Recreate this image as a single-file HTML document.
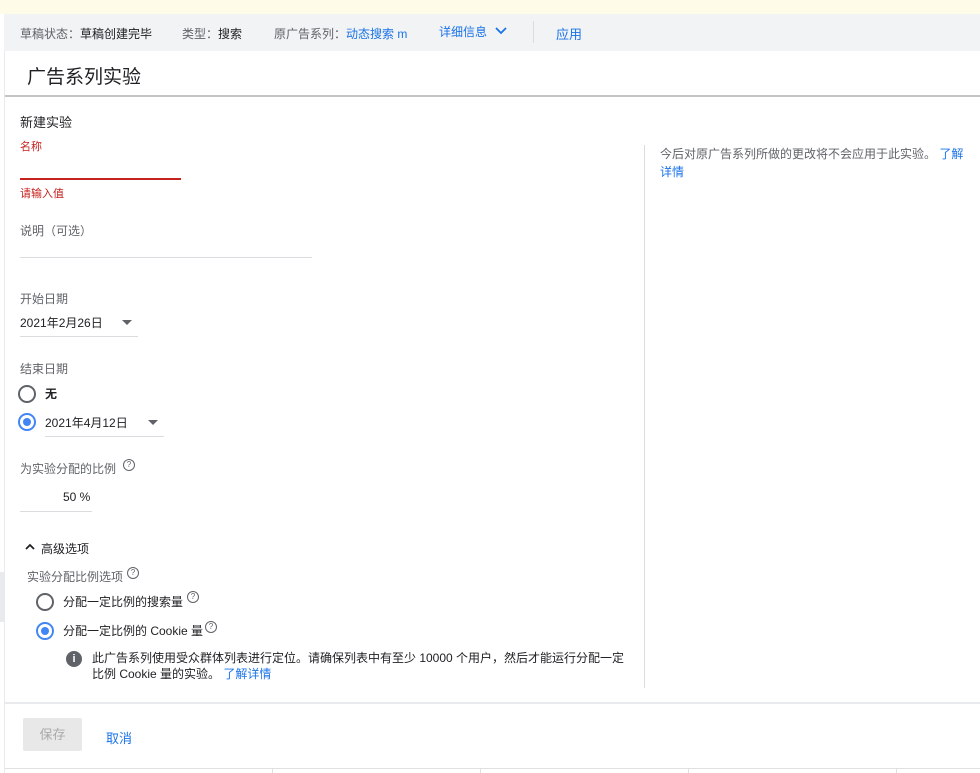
<!DOCTYPE html>
<html><head><meta charset="utf-8"><style>
body{margin:0;width:980px;height:773px;position:relative;overflow:hidden;background:#fff;font-family:"Liberation Sans","Noto Sans CJK SC",sans-serif;font-size:12px;color:#202124}
.a{position:absolute;white-space:nowrap}
.g{color:#5f6368}.b{color:#1a73e8}.r{color:#c5221f}
.line{position:absolute;height:1px;background:#dadce0}
.radio{position:absolute;width:14px;height:14px;border:2px solid #5f6368;border-radius:50%}
.radio.on{border-color:#4285f4}
.radio.on::after{content:"";position:absolute;left:3px;top:3px;width:8px;height:8px;border-radius:50%;background:#4285f4}
.q{position:absolute;width:10px;height:10px;border:1px solid #5f6368;border-radius:50%;font-size:8px;line-height:10px;text-align:center;color:#5f6368}
.tri{position:absolute;width:0;height:0;border-left:5px solid transparent;border-right:5px solid transparent;border-top:5px solid #5f6368}
</style></head><body>
<div class="a" style="left:0;top:0;width:980px;height:14px;background:#fefbe8"></div>
<div class="a" style="left:4px;top:14px;width:976px;height:37px;background:#f1f3f4"></div>
<div class="a" style="left:0;top:14px;width:4px;height:759px;background:#fff"></div>
<div class="a" style="left:4px;top:51px;width:1px;height:722px;background:#e8eaed"></div>
<div class="a g" style="left:20px;top:25px">草稿状态：<span style="color:#202124">草稿创建完毕</span></div>
<div class="a g" style="left:182px;top:25px">类型：<span style="color:#202124">搜索</span></div>
<div class="a g" style="left:274px;top:25px">原广告系列：<span class="b">动态搜索 m</span></div>
<div class="a b" style="left:439px;top:23px">详细信息</div>
<svg class="a" style="left:495px;top:26px" width="12" height="10"><path d="M1 2l5 5 5-5" stroke="#1a73e8" stroke-width="1.8" fill="none"/></svg>
<div class="a" style="left:533px;top:21px;width:1px;height:22px;background:#dadce0"></div>
<div class="a b" style="left:556px;top:24px;font-size:13px">应用</div>
<div class="a" style="left:27px;top:62px;font-size:19px">广告系列实验</div>
<div class="a" style="left:5px;top:95px;width:975px;height:2px;background:#c4c4c4"></div>
<div class="a" style="left:20px;top:112px;font-size:13px">新建实验</div>
<div class="a r" style="left:20px;top:138px;font-size:11px">名称</div>
<div class="a" style="left:20px;top:178px;width:161px;height:2px;background:#c5221f"></div>
<div class="a r" style="left:20px;top:185px;font-size:11px">请输入值</div>
<div class="a g" style="left:20px;top:222px">说明（可选）</div>
<div class="line" style="left:20px;top:257px;width:292px"></div>
<div class="a g" style="left:20px;top:290px">开始日期</div>
<div class="a" style="left:20px;top:314px">2021年2月26日</div>
<div class="tri" style="left:122px;top:320px"></div>
<div class="line" style="left:20px;top:336px;width:118px"></div>
<div class="a g" style="left:20px;top:360px">结束日期</div>
<div class="radio" style="left:18px;top:385px"></div>
<div class="a" style="left:45px;top:385px;font-weight:bold">无</div>
<div class="radio on" style="left:18px;top:413px"></div>
<div class="a" style="left:45px;top:414px">2021年4月12日</div>
<div class="tri" style="left:148px;top:420px"></div>
<div class="line" style="left:45px;top:436px;width:119px"></div>
<div class="a g" style="left:20px;top:460px">为实验分配的比例</div>
<div class="q" style="left:123px;top:459px">?</div>
<div class="a" style="left:63px;top:490px">50 %</div>
<div class="line" style="left:20px;top:511px;width:72px"></div>
<svg class="a" style="left:25px;top:543px" width="10" height="8"><path d="M1 6l4-4 4 4" stroke="#202124" stroke-width="1.8" fill="none"/></svg>
<div class="a" style="left:41px;top:540px">高级选项</div>
<div class="a g" style="left:27px;top:568px">实验分配比例选项</div>
<div class="q" style="left:127px;top:567px">?</div>
<div class="radio" style="left:36px;top:593px"></div>
<div class="a" style="left:63px;top:593px">分配一定比例的搜索量</div>
<div class="q" style="left:187px;top:591px">?</div>
<div class="radio on" style="left:36px;top:622px"></div>
<div class="a" style="left:63px;top:622px">分配一定比例的 Cookie 量</div>
<div class="q" style="left:205px;top:621px">?</div>
<div class="a" style="left:66px;top:651px;width:16px;height:16px;border-radius:50%;background:#5f6368;color:#fff;font-weight:bold;font-size:11px;line-height:16px;text-align:center">i</div>
<div class="a" style="left:92px;top:650px;line-height:16px">此广告系列使用受众群体列表进行定位。请确保列表中有至少 10000 个用户，然后才能运行分配一定<br>比例 Cookie 量的实验。 <span class="b">了解详情</span></div>
<div class="a" style="left:644px;top:145px;width:1px;height:543px;background:#dadce0"></div>
<div class="a g" style="left:660px;top:145px;line-height:18px">今后对原广告系列所做的更改将不会应用于此实验。 <span class="b">了解</span><br><span class="b">详情</span></div>
<div class="a" style="left:0;top:572px;width:4px;height:50px;background:#e8eaed"></div>
<div class="a" style="left:5px;top:702px;width:975px;height:2px;background:#e8eaed"></div>
<div class="a" style="left:23px;top:718px;width:59px;height:33px;background:#e8e8e8;border-radius:2px;color:#aaa;text-align:center;line-height:33px;font-size:13px">保存</div>
<div class="a b" style="left:106px;top:728px;font-size:13px">取消</div>
<div class="a" style="left:5px;top:768px;width:975px;height:1px;background:#e0e0e0"></div>
<div class="a" style="left:272px;top:768px;width:1px;height:5px;background:#e0e0e0"></div>
<div class="a" style="left:480px;top:768px;width:1px;height:5px;background:#e0e0e0"></div>
<div class="a" style="left:688px;top:768px;width:1px;height:5px;background:#e0e0e0"></div>
<div class="a" style="left:896px;top:768px;width:1px;height:5px;background:#e0e0e0"></div>
</body></html>
